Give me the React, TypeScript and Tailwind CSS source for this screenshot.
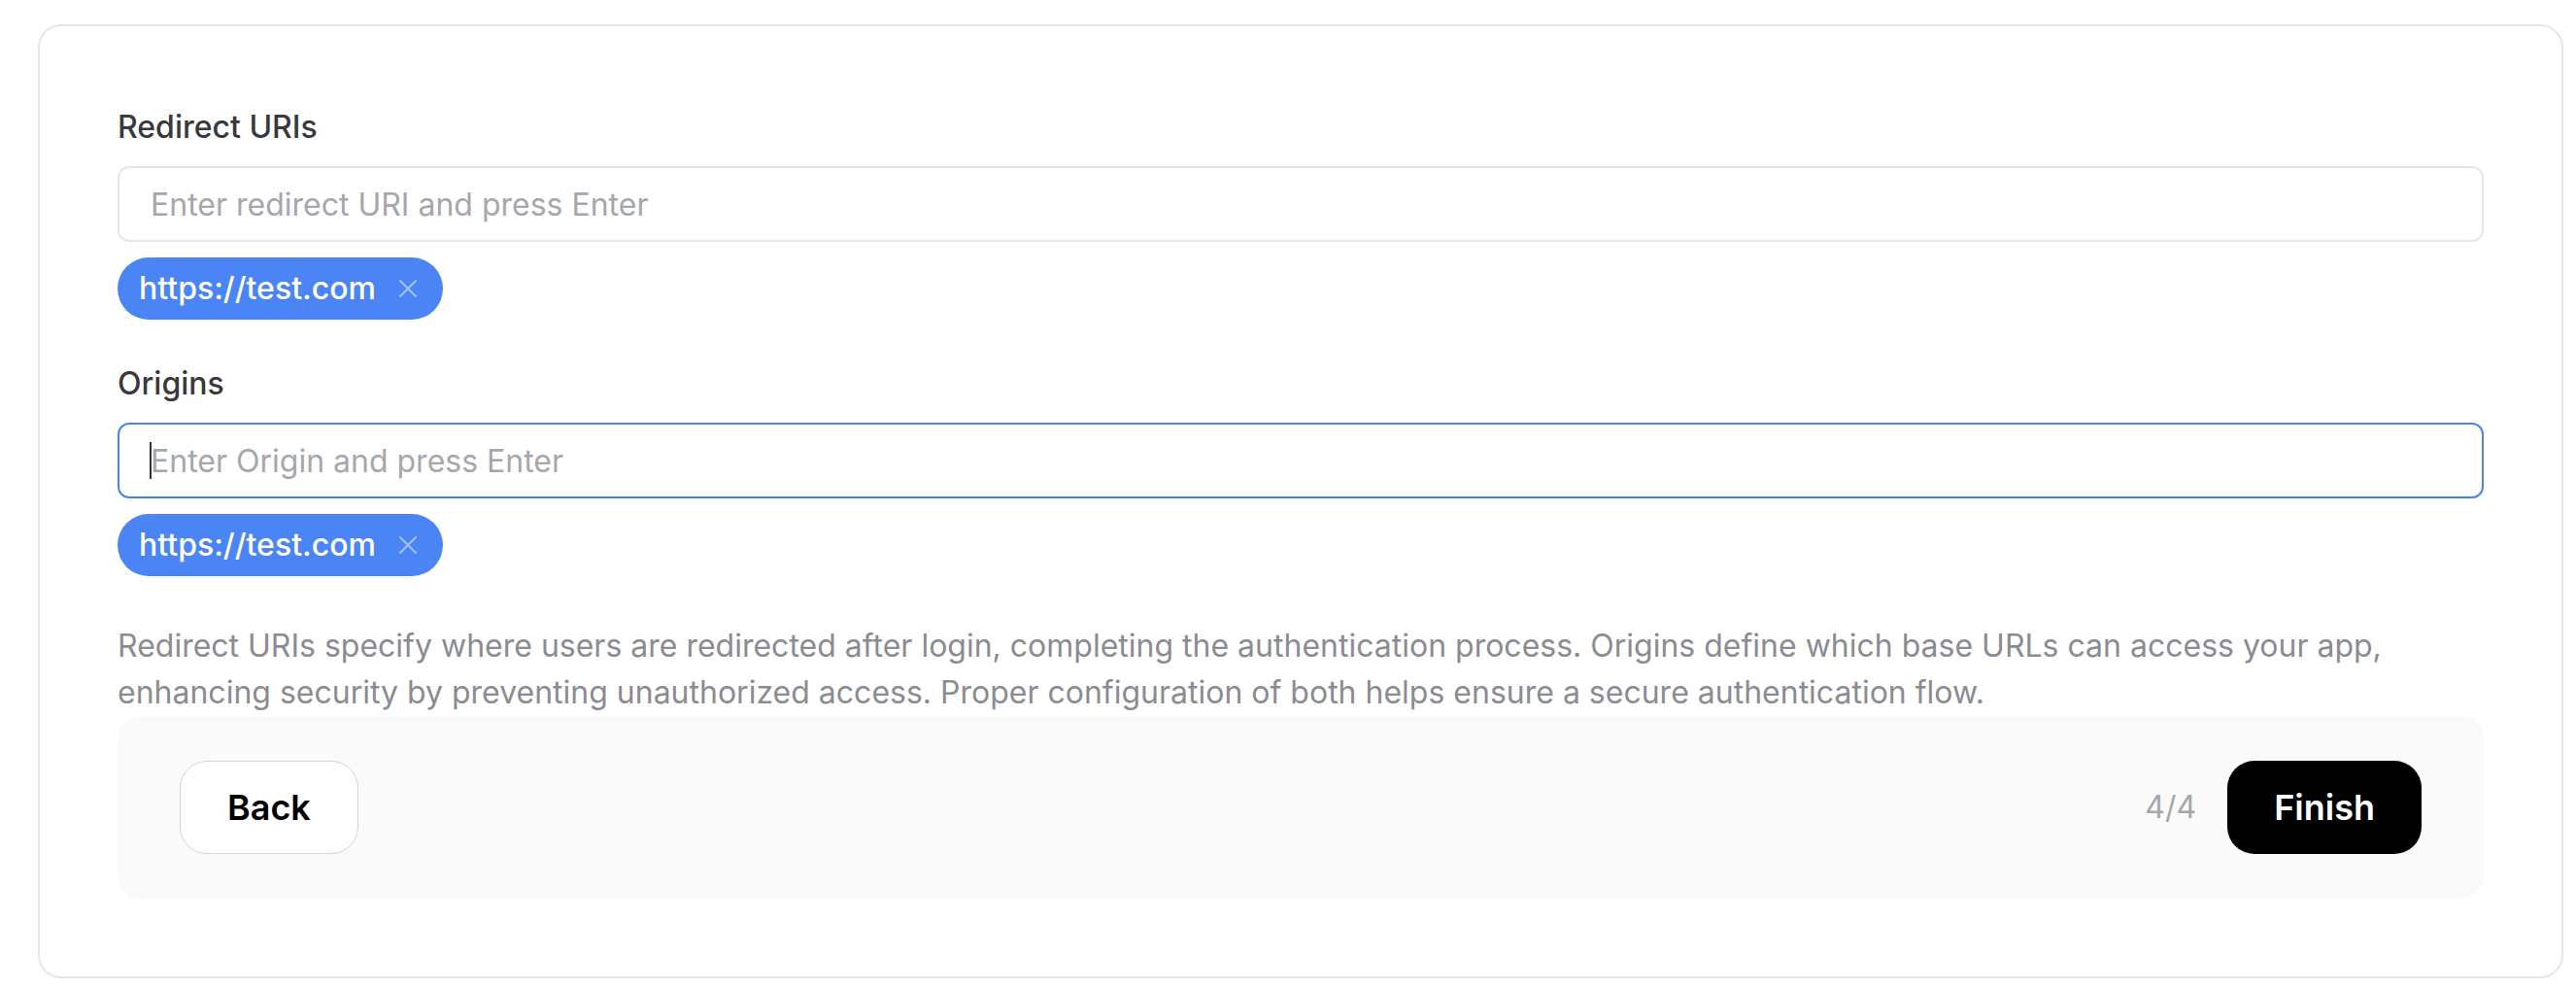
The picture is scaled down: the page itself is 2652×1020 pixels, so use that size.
import React from "react";

const helpText =
  "Redirect URIs specify where users are redirected after login, completing the authentication process. Origins define which base URLs can access your app, enhancing security by preventing unauthorized access. Proper configuration of both helps ensure a secure authentication flow.";

function Chip({ value }: { value: string }) {
  return (
    <span className="flex h-16 items-center gap-6 rounded-full bg-[#4b85f5] pl-[22px] pr-[27px] text-[32px] font-medium text-white">
      {value}
      <svg width="18" height="18" viewBox="0 0 18 18" className="text-white/50">
        <path d="M1 1L17 17M17 1L1 17" stroke="currentColor" strokeWidth="2" strokeLinecap="round" />
      </svg>
    </span>
  );
}

function Field({
  label,
  placeholder,
  chips,
  focused,
}: {
  label: string;
  placeholder: string;
  chips: string[];
  focused?: boolean;
}) {
  return (
    <div className="flex flex-col">
      <label className="text-[32px] font-medium leading-[48px] text-[#38383d]">{label}</label>
      <div className="relative mt-4">
        <input
          readOnly
          placeholder={placeholder}
          className={`h-[78px] w-full rounded-xl border-2 bg-white px-8 text-[32px] outline-none placeholder:text-[#a6a6ad] ${
            focused ? "border-[#4a83ef]" : "border-[#e6e6ea]"
          }`}
        />
        {focused && <span className="absolute left-[33px] top-[20px] h-[38px] w-[2px] bg-[#333]" />}
      </div>
      <div className="mt-4 flex gap-4">
        {chips.map((c) => (
          <Chip key={c} value={c} />
        ))}
      </div>
    </div>
  );
}

export default function App() {
  return (
    <div className="min-h-screen bg-white font-['Inter',sans-serif]">
      <div className="ml-[39px] mt-[25px] w-[2600px] rounded-3xl border-2 border-[#e6e6ea] bg-white p-20">
        <Field label="Redirect URIs" placeholder="Enter redirect URI and press Enter" chips={["https://test.com"]} />
        <div className="mt-[42px]">
          <Field label="Origins" placeholder="Enter Origin and press Enter" chips={["https://test.com"]} focused />
        </div>
        <p className="mt-[48px] text-[32px] leading-[48px] text-[#8b8b93]">{helpText}</p>
        <div className="flex items-center justify-between rounded-3xl bg-[#fafafa] px-16 py-[46px]">
          <button className="h-24 rounded-[28px] border border-[#d4d4d8] bg-white px-12 text-[36px] font-semibold text-black">
            Back
          </button>
          <div className="flex items-center gap-8">
            <span className="text-[32px] text-[#a6a6ad]">4/4</span>
            <button className="h-24 rounded-[28px] bg-black px-12 text-[36px] font-semibold text-white">
              Finish
            </button>
          </div>
        </div>
      </div>
    </div>
  );
}
